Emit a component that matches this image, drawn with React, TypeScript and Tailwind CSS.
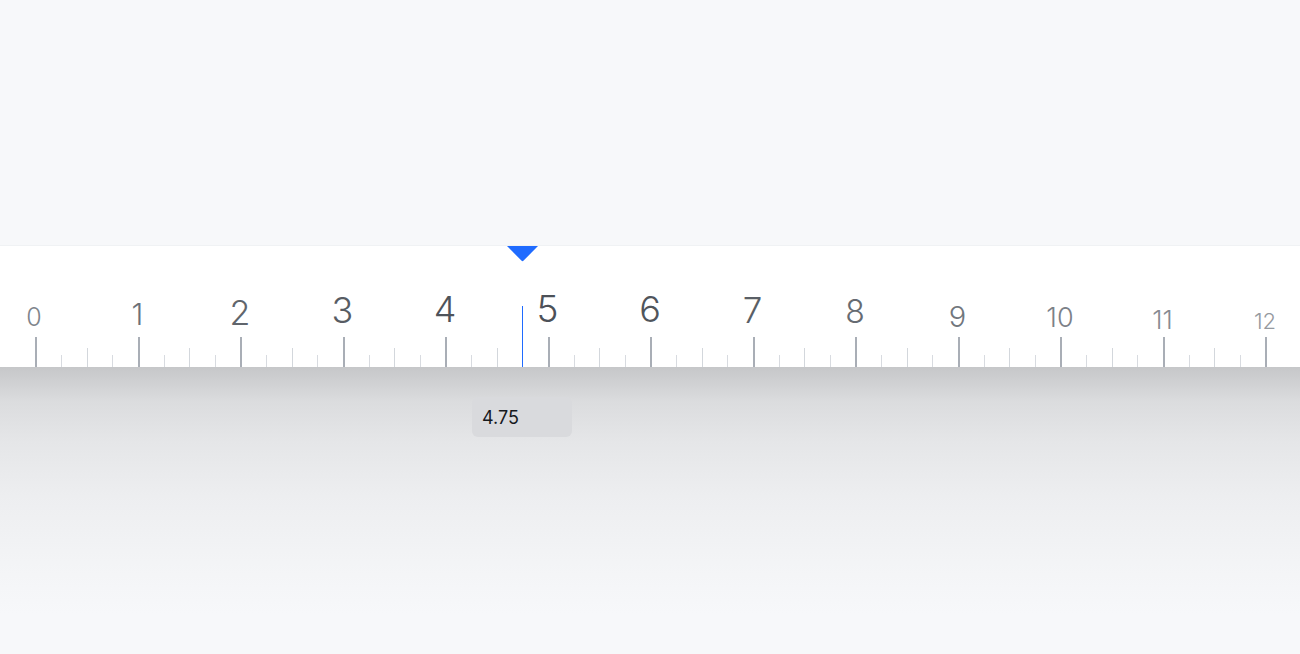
import React from 'react';

type Label = { v: number; cls: string };

// labels swell toward the pointer (fisheye)
const labels: Label[] = [
  { v: 0, cls: 'text-[25px] text-[#80858c] mb-[7px] -translate-x-[2px]' },
  { v: 1, cls: 'text-[30px] text-[#6b7078] mb-[8px] -translate-x-[1px]' },
  { v: 2, cls: 'text-[34px] text-[#60656c] mb-[7px] -translate-x-[1px]' },
  { v: 3, cls: 'text-[36px] text-[#575c63] mb-[9px] -translate-x-[1px]' },
  { v: 4, cls: 'text-[36px] text-[#4e535a] mb-[10px] -translate-x-[1px]' },
  { v: 5, cls: 'text-[37px] text-[#4c5158] mb-[10px] -translate-x-[1px]' },
  { v: 6, cls: 'text-[36px] text-[#50555c] mb-[10px] -translate-x-[1px]' },
  { v: 7, cls: 'text-[35px] text-[#5a5f66] mb-[9px] -translate-x-[1px]' },
  { v: 8, cls: 'text-[32px] text-[#666b72] mb-[9px] -translate-x-[1px]' },
  { v: 9, cls: 'text-[29px] text-[#71767d] mb-[6px] -translate-x-[1px]' },
  { v: 10, cls: 'text-[27px] text-[#7c8188] mb-[6px] -translate-x-[1px]' },
  { v: 11, cls: 'text-[26px] text-[#878b92] mb-[4px] -translate-x-[1px]' },
  { v: 12, cls: 'text-[22px] text-[#969aa0] mb-[5px] -translate-x-[1px]' },
];

function Tick({ i }: { i: number }) {
  if (i % 4 === 0) {
    const label = labels[i / 4];
    return (
      <div className="w-[25.625px] shrink-0 flex flex-col items-center justify-end">
        <span className={`leading-none font-light whitespace-nowrap ${label.cls}`}>{label.v}</span>
        <div className="w-[2px] h-[30px] bg-[#a9aeb6]" />
      </div>
    );
  }
  return (
    <div className="w-[25.625px] shrink-0 flex flex-col items-center justify-end">
      <div className={i % 4 === 2 ? 'w-px h-[19px] bg-[#d3d7dc]' : 'w-px h-[12px] bg-[#d8dbe0]'} />
    </div>
  );
}

export default function App() {
  const ticks = Array.from({ length: 49 }, (_, i) => i);

  return (
    <div
      className="min-h-screen w-full bg-[#f7f8fa] flex flex-col overflow-hidden"
      style={{ fontFamily: 'Inter, "Noto Sans", sans-serif' }}
    >
      <div className="h-[245px] shrink-0" />

      <div className="relative h-[122px] shrink-0 bg-white border-t border-[#f0f2f4]">
        <div className="flex items-end h-full pl-[23.1875px]">
          {ticks.map((i) => (
            <Tick key={i} i={i} />
          ))}
        </div>

        {/* pointer */}
        <svg className="absolute top-0 left-[507px]" width="31" height="16" viewBox="0 0 31 16">
          <path d="M0 0 H31 L16.6 14.6 Q15.5 15.7 14.4 14.6 Z" fill="#1f6bff" />
        </svg>
        <div className="absolute left-[522px] top-[60px] w-px h-[61px] bg-[#1f6bff]" />
      </div>

      <div className="flex-1 h-[287px] bg-[linear-gradient(to_bottom,#c6c7c9_0%,#dbdcde_12%,#e5e6e8_26%,#edeef0_45%,#f3f4f6_68%,#f7f8fa_86%)]">
        <div className="ml-[472px] mt-[30px] w-[100px] h-[40px] rounded-md bg-[#d9dadd] flex items-center px-[10px]">
          <span className="text-[18px] leading-none text-[#16191d] translate-y-[1px]">4.75</span>
        </div>
      </div>
    </div>
  );
}
